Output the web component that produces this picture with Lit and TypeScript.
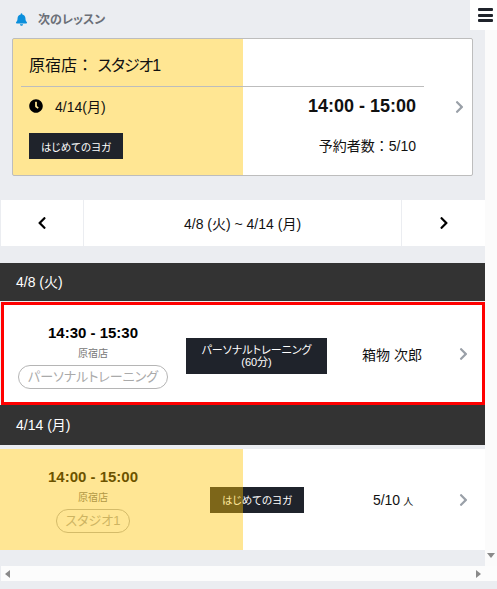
import { LitElement, html, css, svg } from "lit";
import { customElement } from "lit/decorators.js";

const chevR = "M285.476 272.971L91.132 467.314c-9.373 9.373-24.569 9.373-33.941 0l-22.667-22.667c-9.357-9.357-9.375-24.522-.04-33.901L188.505 256 34.484 101.255c-9.335-9.379-9.317-24.544.04-33.901l22.667-22.667c9.373-9.373 24.569-9.373 33.941 0L285.475 239.03c9.373 9.372 9.373 24.568.001 33.941z";
const chevL = "M34.52 239.03L228.87 44.69c9.37-9.37 24.57-9.37 33.94 0l22.67 22.67c9.36 9.36 9.37 24.52.04 33.9L131.49 256l154.02 154.75c9.34 9.38 9.32 24.54-.04 33.9l-22.67 22.67c-9.37 9.37-24.57 9.37-33.94 0L34.52 272.97c-9.37-9.37-9.37-24.57 0-33.94z";
const bell = "M224 512c35.32 0 63.97-28.65 63.97-64H160.03c0 35.35 28.65 64 63.97 64zm215.39-149.71c-19.32-20.76-55.47-51.99-55.47-154.29 0-77.7-54.48-139.9-127.94-155.16V32c0-17.67-14.32-32-31.98-32s-31.98 14.33-31.98 32v20.84C118.56 68.1 64.08 130.3 64.08 208c0 102.3-36.15 133.53-55.47 154.29-6 6.45-8.66 14.16-8.61 21.71.11 16.4 12.98 32 32.1 32h383.8c19.12 0 32-15.6 32.1-32 .05-7.55-2.61-15.27-8.61-21.71z";
const clock = "M256,8C119,8,8,119,8,256S119,504,256,504,504,393,504,256,393,8,256,8Zm92.49,313h0l-20,25a16,16,0,0,1-22.49,2.5h0l-67-49.72a40,40,0,0,1-15-31.23V112a16,16,0,0,1,16-16h32a16,16,0,0,1,16,16V256l58,42.5A16,16,0,0,1,348.49,321Z";

const icon = (d: string, vb: string, cls: string) =>
  html`<svg class=${cls} viewBox=${vb} aria-hidden="true">${svg`<path fill="currentColor" d=${d}></path>`}</svg>`;

@customElement("app-root")
export class AppRoot extends LitElement {
  static styles = css`
    :host {
      display: block;
      position: relative;
      width: 497px;
      height: 589px;
      overflow: hidden;
      background: #ebedf1;
      font-family: "Liberation Sans", "Noto Sans CJK JP", sans-serif;
      font-feature-settings: "palt";
      color: #111;
    }
    .frame { display: grid; grid-template-columns: 485px 12px; height: 566px; }
    .vbar { background: #fbfbfb; display: flex; flex-direction: column; justify-content: flex-end; align-items: center; padding-bottom: 8px; box-sizing: border-box; }
    .arrow-d { width: 0; height: 0; border-left: 4px solid transparent; border-right: 4px solid transparent; border-top: 5px solid #8a8a8a; }
    main { min-width: 0; }
    .head { height: 38px; box-sizing: border-box; padding: 11px 0 0 16px; display: flex; align-items: flex-start; gap: 11px; font-size: 12px; line-height: 16px; font-weight: 700; color: #6b7078; }
    .head span { padding-top: 1px; }
    .bell { width: 11px; height: 13px; color: #0b8fdc; margin-top: 2px; }
    .card {
      margin-left: 12px; width: 461px; height: 138px; box-sizing: border-box;
      border: 1px solid #bdbdbd; border-radius: 2px;
      background: linear-gradient(90deg, #ffe693 230px, #fff 230px);
      display: grid; grid-template-columns: 1fr 48px;
    }
    .card-body { padding: 0 0 0 8px; display: flex; flex-direction: column; }
    .card-title { height: 48px; box-sizing: border-box; padding: 16px 0 0 8px; font-size: 16px; line-height: 22px; border-bottom: 1px solid #bdbdbd; }
    .kana { letter-spacing: -1px; }
    .colon { font-feature-settings: normal; }
    .card-mid { display: flex; align-items: center; justify-content: space-between; padding: 0 8px 0 8px; height: 38px; }
    .card-date { display: flex; align-items: center; gap: 12px; font-size: 14px; }
    .clock { width: 14px; height: 14px; color: #000; }
    .card-time { font-size: 18px; font-weight: 700; line-height: 22px; }
    .card-bot { display: flex; align-items: center; justify-content: space-between; padding: 8px 8px 0 8px; }
    .badge { background: #1f232b; color: #fff; display: flex; align-items: center; justify-content: center; text-align: center; }
    .badge-s { width: 94px; height: 26px; font-size: 10.5px; }
    .badge-l { width: 141px; height: 36px; font-size: 11px; line-height: 12px; flex-direction: column; }
    .card-count { font-size: 14px; padding-bottom: 2px; }
    .card-arrow { display: flex; align-items: center; justify-content: flex-end; padding-right: 8px; }
    .chev { width: 9px; height: 14px; color: #9aa0a8; }
    .nav { margin: 24px 0 17px 1px; height: 46px; background: #fff; display: grid; grid-template-columns: 82px 1fr 83px; font-size: 14px; }
    .nav > div { display: flex; align-items: center; justify-content: center; }
    .nav .mid { border-left: 1px solid #ebedf1; border-right: 1px solid #ebedf1; }
    .nav-chev { width: 10px; height: 14px; color: #000; }
    .day { height: 38px; background: #333; color: #fff; font-size: 14px; display: flex; align-items: center; padding: 0 0 2px 16px; box-sizing: border-box; }
    .day.second { height: 40px; }
    .row { display: grid; align-items: center; background: #fff; }
    .row.sel { margin-left: 1px; height: 103px; margin-top: 1px; border: 3px solid #f00; box-sizing: border-box; grid-template-columns: 178px 4px 141px 130px 1fr; }
    .row.plain { position: relative; margin-top: 4px; height: 101px; grid-template-columns: 186px 0 142px 130px 1fr; }
    .sel .when { margin-top: 6px; }
    .plain .when { margin-top: 1px; }
    .sel .mid-col { margin-top: 5px; }
    .sel .go { padding-left: 2px; }
    .plain .go { padding-left: 1px; }
    .shade { position: absolute; left: 0; top: 0; bottom: 0; width: 243px; background: rgba(255, 195, 0, 0.42); }
    .when { display: flex; flex-direction: column; align-items: center; }
    .time { font-size: 15px; font-weight: 700; line-height: 18px; color: #000; }
    .shop { font-size: 10px; color: #777; line-height: 12px; margin-top: 6px; }
    .tag { margin-top: 5px; border: 1px solid #b5b5b5; border-radius: 12px; padding: 0 9px; height: 24px; box-sizing: border-box; font-size: 13px; line-height: 22px; color: #aaa; white-space: nowrap; }
    .mid-col { display: flex; justify-content: center; }
    .teacher { text-align: center; font-size: 14px; }
    .people { text-align: center; font-size: 14px; }
    .people small { font-size: 10px; margin-left: 3px; }
    .go { display: flex; justify-content: flex-start; }
    .hbar { height: 15px; background: #fcfcfc; margin-left: 1px; width: 496px; display: flex; align-items: center; justify-content: space-between; padding: 0 16px 0 4px; box-sizing: border-box; }
    .arrow-l { width: 0; height: 0; border-top: 4px solid transparent; border-bottom: 4px solid transparent; border-right: 5px solid #8a8a8a; }
    .arrow-r { width: 0; height: 0; border-top: 4px solid transparent; border-bottom: 4px solid transparent; border-left: 5px solid #8a8a8a; }
    .menu { position: absolute; right: 0; top: 0; width: 27px; height: 30px; background: #fff; }
    .menu span { position: absolute; left: 8px; width: 15px; height: 2.5px; background: #1f232b; border-radius: 1px; }
    .menu span:nth-child(1) { top: 8px; }
    .menu span:nth-child(2) { top: 14px; }
    .menu span:nth-child(3) { top: 19px; }
  `;

  render() {
    return html`
      <div class="frame">
        <main>
          <div class="head">${icon(bell, "0 0 448 512", "bell")}<span>次のレッスン</span></div>
          <div class="card">
            <div class="card-body">
              <div class="card-title">原宿店<span class="colon">：</span> <span class="kana">スタジオ1</span></div>
              <div class="card-mid">
                <div class="card-date">${icon(clock, "0 0 512 512", "clock")}<span>4/14(月)</span></div>
                <div class="card-time">14:00 - 15:00</div>
              </div>
              <div class="card-bot">
                <div class="badge badge-s">はじめてのヨガ</div>
                <div class="card-count">予約者数<span class="colon">：</span>5/10</div>
              </div>
            </div>
            <div class="card-arrow">${icon(chevR, "0 0 320 512", "chev")}</div>
          </div>
          <div class="nav">
            <div>${icon(chevL, "0 0 320 512", "nav-chev")}</div>
            <div class="mid">4/8 (火) ~ 4/14 (月)</div>
            <div>${icon(chevR, "0 0 320 512", "nav-chev")}</div>
          </div>
          <div class="day">4/8 (火)</div>
          <div class="row sel">
            <div class="when">
              <div class="time">14:30 - 15:30</div>
              <div class="shop">原宿店</div>
              <div class="tag">パーソナルトレーニング</div>
            </div>
            <div></div>
            <div class="mid-col"><div class="badge badge-l"><span>パーソナルトレーニング</span><span>(60分)</span></div></div>
            <div class="teacher">箱物 次郎</div>
            <div class="go">${icon(chevR, "0 0 320 512", "chev")}</div>
          </div>
          <div class="day second">4/14 (月)</div>
          <div class="row plain">
            <div class="when">
              <div class="time">14:00 - 15:00</div>
              <div class="shop">原宿店</div>
              <div class="tag">スタジオ1</div>
            </div>
            <div></div>
            <div class="mid-col"><div class="badge badge-s">はじめてのヨガ</div></div>
            <div class="people">5/10<small>人</small></div>
            <div class="go">${icon(chevR, "0 0 320 512", "chev")}</div>
            <div class="shade"></div>
          </div>
        </main>
        <div class="vbar"><div class="arrow-d"></div></div>
      </div>
      <div class="hbar"><div class="arrow-l"></div><div class="arrow-r"></div></div>
      <div class="menu"><span></span><span></span><span></span></div>
    `;
  }
}
